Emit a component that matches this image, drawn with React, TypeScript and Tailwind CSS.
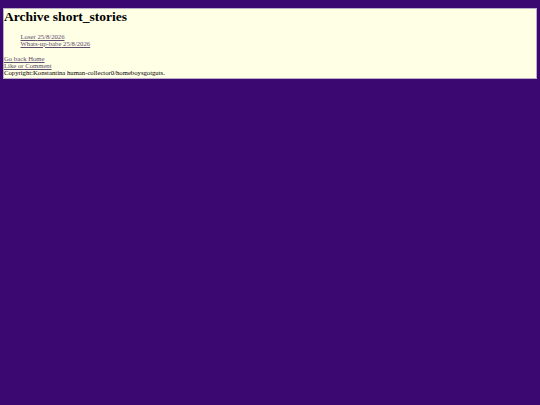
const stories = [
  { title: "Loser", date: "25/8/2026" },
  { title: "Whats-up-babe", date: "25/8/2026" },
];

export default function App() {
  return (
    <div className="min-h-[405px] bg-[#3a0870] px-[3px] pt-[8px] font-['Liberation_Serif',serif] text-black">
      <div className="border border-[#b9b0c8] bg-[#ffffe6] pb-[2px] text-[6.7px] leading-[7px]">
        <h1 className="text-[13.5px] leading-[16px] font-bold">Archive short_stories</h1>
        <ul className="pt-[7.5px] pb-[8px] pl-[16.5px]">
          {stories.map((s) => (
            <li key={s.title}>
              <a href="#" className="text-[#5c4b6e] underline">
                {s.title} {s.date}
              </a>
            </li>
          ))}
        </ul>
        <div className="flex flex-col">
          <a href="#" className="text-[#5c4b6e] underline">Go back Home</a>
          <a href="#" className="text-[#5c4b6e] underline">Like or Comment</a>
          <span>Copyright:Konstantina human-collector0/homeboysgotguts.</span>
        </div>
      </div>
    </div>
  );
}
